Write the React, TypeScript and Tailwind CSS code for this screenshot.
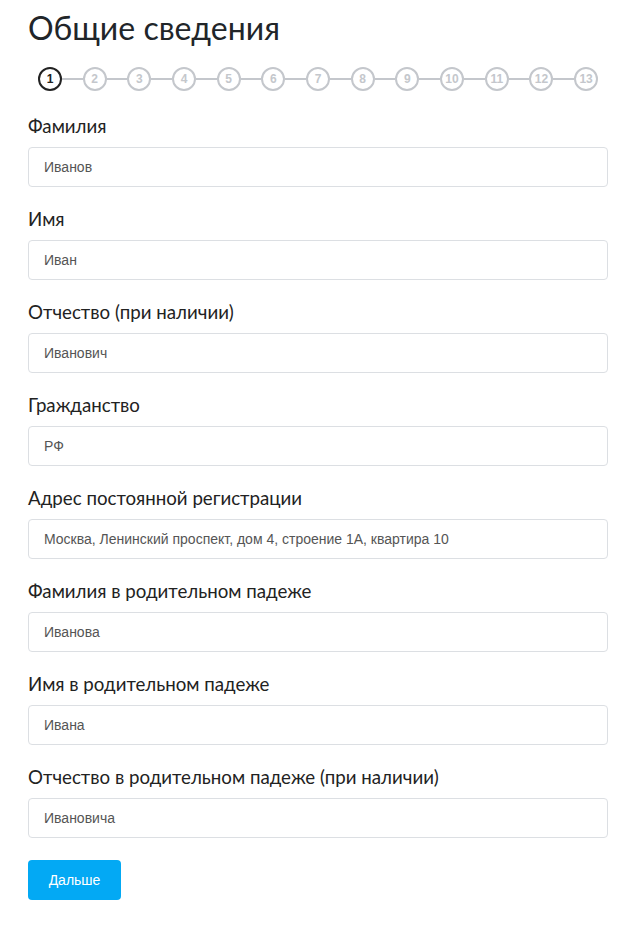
import React from "react";

const fields = [
  { label: "Фамилия", value: "Иванов" },
  { label: "Имя", value: "Иван" },
  { label: "Отчество (при наличии)", value: "Иванович" },
  { label: "Гражданство", value: "РФ" },
  { label: "Адрес постоянной регистрации", value: "Москва, Ленинский проспект, дом 4, строение 1А, квартира 10" },
  { label: "Фамилия в родительном падеже", value: "Иванова" },
  { label: "Имя в родительном падеже", value: "Ивана" },
  { label: "Отчество в родительном падеже (при наличии)", value: "Ивановича" },
];

const steps = Array.from({ length: 13 }, (_, i) => i + 1);

export default function App() {
  return (
    <div className="min-h-[927px] bg-white pl-[28px] pr-[25px] pt-[10px] text-[#212529] [font-family:Lato,sans-serif]">
      <h1 className="text-[32px] leading-[36px] font-normal">Общие сведения</h1>

      {/* Stepper */}
      <div className="mt-[21px] flex items-center px-[10px]">
        {steps.map((n) => (
          <React.Fragment key={n}>
            {n > 1 && <div className="h-[2px] flex-1 bg-[#c4c7cc]" />}
            <div
              className={`flex h-[24px] w-[24px] shrink-0 items-center justify-center rounded-full border-2 text-[12px] font-bold [font-family:'Liberation_Sans',sans-serif] ${
                n === 1 ? "border-[#222] text-[#222]" : "border-[#c4c7cc] text-[#c4c7cc]"
              }`}
            >
              {n}
            </div>
          </React.Fragment>
        ))}
      </div>

      <form className="mt-[22px] flex flex-col gap-[19px]">
        {fields.map((f) => (
          <div key={f.label} className="flex flex-col">
            <label className="text-[18.7px] leading-[26px] text-[#222]">{f.label}</label>
            <input
              readOnly
              defaultValue={f.value}
              className="mt-[8px] h-[40px] w-full rounded-[4px] border border-[#dcdfe3] px-[15px] text-[14px] text-[#555] outline-none [font-family:'Liberation_Sans',sans-serif]"
            />
          </div>
        ))}
      </form>

      <button className="mt-[22px] h-[40px] w-[93px] rounded-[4px] bg-[#03a9f4] text-[14px] text-white [font-family:'Liberation_Sans',sans-serif]">
        Дальше
      </button>
    </div>
  );
}
